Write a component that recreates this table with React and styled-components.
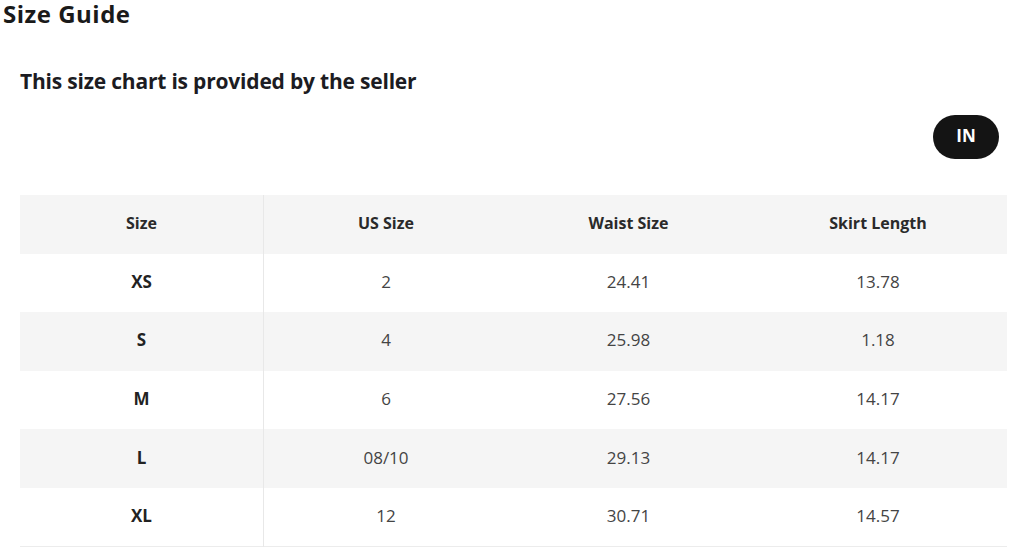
import React from 'react';
import styled, { createGlobalStyle } from 'styled-components';

const GlobalStyle = createGlobalStyle`
  html, body {
    margin: 0;
    padding: 0;
    background: #fff;
  }
  body {
    font-family: "Open Sans", "Liberation Sans", sans-serif;
    color: #1b1b1b;
  }
`;

const rows = [
  ['XS', '2', '24.41', '13.78'],
  ['S', '4', '25.98', '1.18'],
  ['M', '6', '27.56', '14.17'],
  ['L', '08/10', '29.13', '14.17'],
  ['XL', '12', '30.71', '14.57'],
];

const headers = ['Size', 'US Size', 'Waist Size', 'Skirt Length'];

const App = () => {
  return (
    <Page>
      <GlobalStyle />
      <Title>Size Guide</Title>
      <Content>
        <Subtitle>This size chart is provided by the seller</Subtitle>
        <UnitBar>
          <UnitButton type="button">IN</UnitButton>
        </UnitBar>
        <Table>
          <thead>
            <Row $striped>
              {headers.map((h) => (
                <HeadCell key={h}>{h}</HeadCell>
              ))}
            </Row>
          </thead>
          <tbody>
            {rows.map((r, i) => (
              <Row key={r[0]} $striped={i % 2 === 1}>
                {r.map((v, j) => (
                  <Cell key={j} $first={j === 0}>
                    {v}
                  </Cell>
                ))}
              </Row>
            ))}
          </tbody>
        </Table>
      </Content>
    </Page>
  );
};

export default App;

const Page = styled.div`
  width: 1010px;
  height: 549px;
  overflow: hidden;
  padding: 1px 3px 0 3px;
  box-sizing: border-box;
`;

const Title = styled.h1`
  margin: 0;
  font-size: 24px;
  line-height: 26px;
  font-weight: 700;
  color: #1a1a1a;
  letter-spacing: 0.5px;
`;

const Content = styled.div`
  padding: 0 0 0 17px;
  margin-top: 42px;
`;

const Subtitle = styled.h2`
  margin: 0;
  font-size: 21px;
  line-height: 24px;
  font-weight: 700;
  color: #1c1c22;
  letter-spacing: -0.2px;
`;

const UnitBar = styled.div`
  display: flex;
  justify-content: flex-end;
  padding-right: 8px;
  margin-top: 22px;
`;

const UnitButton = styled.button`
  width: 66px;
  height: 44px;
  border: none;
  border-radius: 22px;
  background: #141414;
  color: #fff;
  font-family: "Open Sans", "Liberation Sans", sans-serif;
  font-size: 17px;
  font-weight: 700;
  padding: 0 0 4px;
  cursor: pointer;
`;

const Table = styled.table`
  margin-top: 36px;
  width: 987px;
  border-collapse: collapse;
  table-layout: fixed;
  border-bottom: 1px solid #ececec;
`;

const Row = styled.tr`
  height: 58.6px;
  background: ${(p) => (p.$striped ? '#f5f5f5' : '#fff')};
`;

const HeadCell = styled.th`
  font-size: 16px;
  font-weight: 700;
  color: #2a2a2a;
  text-align: center;
  vertical-align: middle;
  padding: 0 0 3px;

  &:first-child {
    width: 243px;
    border-right: 1px solid #e8e8e8;
  }
  &:nth-child(2) { width: 244px; }
  &:nth-child(3) { width: 241px; }
`;

const Cell = styled.td`
  font-size: 17px;
  font-weight: ${(p) => (p.$first ? 700 : 400)};
  color: ${(p) => (p.$first ? '#222' : '#444')};
  text-align: center;
  vertical-align: middle;
  padding: 0 0 3px;
  border-right: ${(p) => (p.$first ? '1px solid #e8e8e8' : 'none')};
`;
